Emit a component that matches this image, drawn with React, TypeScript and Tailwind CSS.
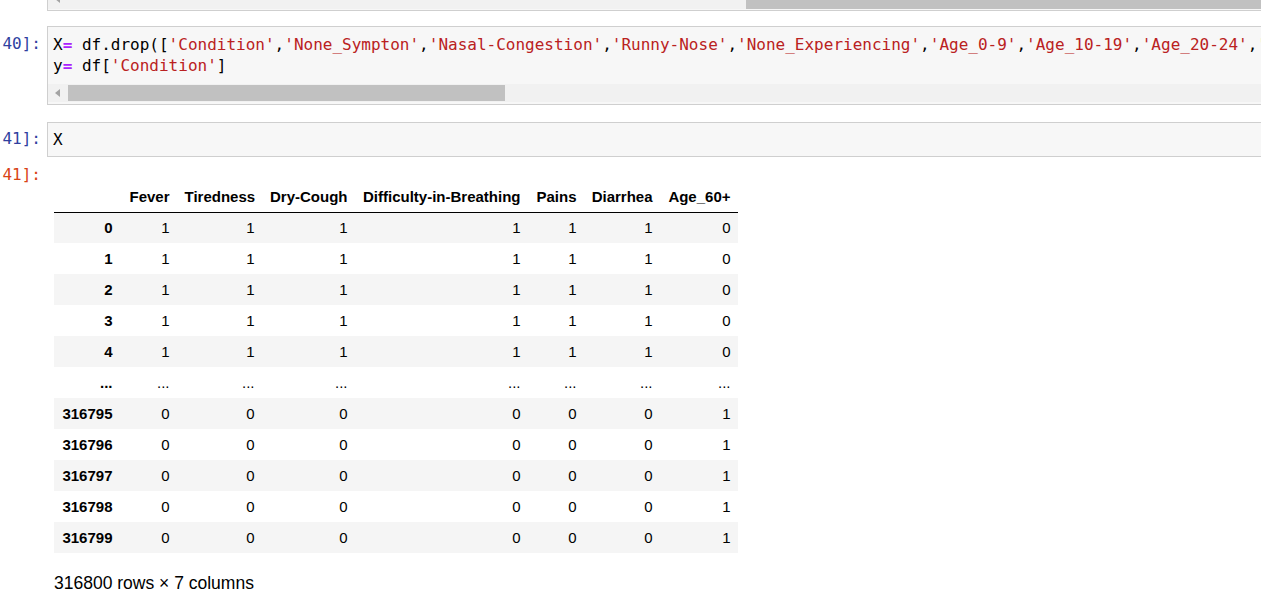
import React from 'react';

const mono = "font-['DejaVu_Sans_Mono',monospace]";
const sans = "font-['Liberation_Sans',Arial,sans-serif]";

const dropCols = [
  'Condition', 'None_Sympton', 'Nasal-Congestion', 'Runny-Nose', 'None_Experiencing',
  'Age_0-9', 'Age_10-19', 'Age_20-24', 'Age_25-59', 'Gender_Female',
];

const columns = ['Fever', 'Tiredness', 'Dry-Cough', 'Difficulty-in-Breathing', 'Pains', 'Diarrhea', 'Age_60+'];
const widths = ['w-[66px]', 'w-[57px]', 'w-[85px]', 'w-[93px]', 'w-[173px]', 'w-[56px]', 'w-[76px]', 'w-[78px]'];

const rows: string[][] = [
  ['0', '1', '1', '1', '1', '1', '1', '0'],
  ['1', '1', '1', '1', '1', '1', '1', '0'],
  ['2', '1', '1', '1', '1', '1', '1', '0'],
  ['3', '1', '1', '1', '1', '1', '1', '0'],
  ['4', '1', '1', '1', '1', '1', '1', '0'],
  ['...', '...', '...', '...', '...', '...', '...', '...'],
  ['316795', '0', '0', '0', '0', '0', '0', '1'],
  ['316796', '0', '0', '0', '0', '0', '0', '1'],
  ['316797', '0', '0', '0', '0', '0', '0', '1'],
  ['316798', '0', '0', '0', '0', '0', '0', '1'],
  ['316799', '0', '0', '0', '0', '0', '0', '1'],
];

const Str = ({ children }: { children: React.ReactNode }) => (
  <span className="text-[#ba2121]">{children}</span>
);

const Op = () => <span className="text-[#aa22ff] font-bold">=</span>;

const LeftArrow = () => (
  <svg width="6" height="8" viewBox="0 0 6 8" className="shrink-0">
    <path d="M5 0 L0 4 L5 8 Z" fill="#a3a3a3" />
  </svg>
);

const Prompt = ({ text, color }: { text: string; color: string }) => (
  <div className={`w-[47px] shrink-0 text-right pr-[6px] ${mono} text-[16px] leading-[21px] ${color}`}>{text}</div>
);

const App: React.FC = () => {
  return (
    <div className="w-full h-[609px] overflow-hidden bg-white text-black">
      <div className="w-[1300px]">
        {/* tail of the previous cell */}
        <div className="flex">
          <div className="w-[47px] shrink-0" />
          <div className="flex-1 h-[11px] bg-[#f7f7f7] border-l border-b border-[#cfcfcf] overflow-hidden">
            <div className="h-[9px] bg-[#f1f1f1] flex items-start">
              <div className="w-[7px] shrink-0" />
              <div className="-mt-[5px]">
                <LeftArrow />
              </div>
              <div className="w-[685px] shrink-0" />
              <div className="flex-1 h-[9px] bg-[#c1c1c1]" />
            </div>
          </div>
        </div>

        {/* In [40] */}
        <div className="flex mt-[15px]">
          <div className="pt-[7px]">
            <Prompt text="40]:" color="text-[#303f9f]" />
          </div>
          <div className="flex-1 h-[79px] bg-[#f7f7f7] border border-[#cfcfcf] overflow-hidden">
            <div className={`pt-[7px] pl-[5px] ${mono} text-[16px] leading-[21px] whitespace-pre`}>
              <div>
                X<Op /> df.drop([
                {dropCols.map((c, i) => (
                  <React.Fragment key={c}>
                    {i > 0 && ','}
                    <Str>'{c}'</Str>
                  </React.Fragment>
                ))}
                ], axis=1)
              </div>
              <div>
                y<Op /> df[<Str>'Condition'</Str>]
              </div>
            </div>
            <div className="mt-[8px] h-[18px] bg-[#f1f1f1] flex items-center">
              <div className="w-[7px] shrink-0" />
              <LeftArrow />
              <div className="w-[7px] shrink-0" />
              <div className="w-[437px] h-[16px] bg-[#c1c1c1]" />
            </div>
          </div>
        </div>

        {/* In [41] */}
        <div className="flex mt-[17px]">
          <div className="pt-[6px]">
            <Prompt text="41]:" color="text-[#303f9f]" />
          </div>
          <div className={`flex-1 h-[35px] bg-[#f7f7f7] border border-[#cfcfcf] pt-[6px] pl-[5px] ${mono} text-[16px] leading-[21px]`}>
            X
          </div>
        </div>

        {/* Out [41] */}
        <div className="flex mt-[7px]">
          <Prompt text="41]:" color="text-[#d84315]" />
          <div className={`pl-[7px] pt-[17px] ${sans}`}>
            <table className="table-fixed w-[684px] border-collapse text-[15px] leading-[17px]">
              <thead>
                <tr className="h-[31px] border-b border-black">
                  <th className={`${widths[0]} px-[7.5px] text-right font-bold`} />
                  {columns.map((c, i) => (
                    <th key={c} className={`${widths[i + 1]} px-[7.5px] text-right font-bold whitespace-nowrap`}>
                      {c}
                    </th>
                  ))}
                </tr>
              </thead>
              <tbody>
                {rows.map((r, ri) => (
                  <tr key={ri} className={`h-[31px] ${ri % 2 === 0 ? 'bg-[#f5f5f5]' : 'bg-white'}`}>
                    <th className="px-[7.5px] text-right font-bold">{r[0]}</th>
                    {r.slice(1).map((v, ci) => (
                      <td key={ci} className="px-[7.5px] text-right font-normal">
                        {v}
                      </td>
                    ))}
                  </tr>
                ))}
              </tbody>
            </table>
            <p className="mt-[20px] text-[17.5px] leading-[20px]">316800 rows × 7 columns</p>
          </div>
        </div>
      </div>
    </div>
  );
};

export default App;
